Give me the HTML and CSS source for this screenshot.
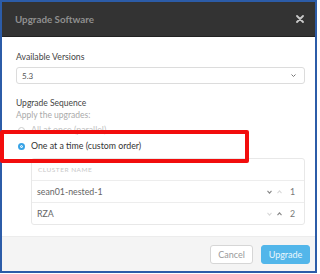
FILE: index.html
```html
<!DOCTYPE html>
<html lang="en">
<head>
    <meta charset="UTF-8">
    <meta name="viewport" content="width=device-width, initial-scale=1.0">
    <title>Upgrade Software</title>
    <link rel="stylesheet" href="styles.css">
</head>
<body>
    <div class="dialog">
        <div class="dialog-header">
            <h1>Upgrade Software</h1>
            <span class="close">
                <svg width="8" height="8" viewBox="0 0 8 8"><path d="M1 1L7 7M7 1L1 7" stroke="#c9c9c9" stroke-width="1.8" stroke-linecap="round"/></svg>
            </span>
        </div>
        <div class="dialog-body">
            <div class="field-label">Available Versions</div>
            <div class="select">
                <span>5.3</span>
                <svg width="5" height="3" viewBox="0 0 5 3"><path d="M0.5 0.5L2.5 2.5L4.5 0.5" fill="none" stroke="#777" stroke-width="1"/></svg>
            </div>
            <div class="section-title">Upgrade Sequence</div>
            <div class="hint">Apply the upgrades:</div>
            <div class="radio-row muted">
                <span class="radio"></span>
                <span>All at once (parallel)</span>
            </div>
            <div class="radio-row">
                <span class="radio checked"></span>
                <span>One at a time (custom order)</span>
            </div>
            <div class="cluster-table">
                <div class="table-head">CLUSTER NAME</div>
                <div class="table-row">
                    <span>sean01-nested-1</span>
                    <span class="order">
                        <svg width="5" height="4" viewBox="0 0 5 4"><path d="M0.5 0.8L2.5 3.2L4.5 0.8" fill="none" stroke="#8a8a8a" stroke-width="1.1"/></svg>
                        <svg width="5" height="4" viewBox="0 0 5 4"><path d="M0.5 3.2L2.5 0.8L4.5 3.2" fill="none" stroke="#dadada" stroke-width="1.1"/></svg>
                        <b>1</b>
                    </span>
                </div>
                <div class="table-row">
                    <span>RZA</span>
                    <span class="order">
                        <svg width="5" height="4" viewBox="0 0 5 4"><path d="M0.5 0.8L2.5 3.2L4.5 0.8" fill="none" stroke="#dadada" stroke-width="1.1"/></svg>
                        <svg width="5" height="4" viewBox="0 0 5 4"><path d="M0.5 3.2L2.5 0.8L4.5 3.2" fill="none" stroke="#8a8a8a" stroke-width="1.1"/></svg>
                        <b>2</b>
                    </span>
                </div>
            </div>
        </div>
        <div class="dialog-footer">
            <button class="btn btn-cancel">Cancel</button>
            <button class="btn btn-primary">Upgrade</button>
        </div>
    </div>
    <div class="highlight"></div>
</body>
</html>
```

FILE: styles.css
```css
body {
    font-family: Lato, "Open Sans", sans-serif;
    background-color: #fff;
    margin: 0;
    padding: 0;
}
.dialog {
    width: 317px;
    height: 273px;
    box-sizing: border-box;
    border: 2px solid #2c5ca8;
    display: flex;
    flex-direction: column;
    background-color: #fff;
}
.dialog-header {
    height: 35px;
    flex-shrink: 0;
    background-color: #333;
    border-bottom: 1px solid #222;
    box-sizing: border-box;
    display: flex;
    align-items: center;
    justify-content: space-between;
    padding: 0 11px 0 13px;
}
.dialog-header h1 {
    margin: 0;
    font-size: 9.8px;
    font-weight: bold;
    color: #8f8f8f;
}
.close {
    display: flex;
}
.dialog-body {
    flex: 1;
    padding: 0 10px 0 14px;
    color: #444;
}
.field-label {
    margin-top: 15px;
    font-size: 8.7px;
    line-height: 10px;
    color: #444;
}
.select {
    margin-top: 5px;
    height: 17px;
    box-sizing: border-box;
    border: 1px solid #dcdcdc;
    border-radius: 3px;
    display: flex;
    align-items: center;
    justify-content: space-between;
    padding: 0 8px 0 5px;
    font-size: 8px;
    color: #555;
}
.section-title {
    margin-top: 13px;
    font-size: 8.5px;
    line-height: 12px;
    color: #444;
}
.hint {
    font-size: 8.5px;
    line-height: 12px;
    color: #aaa;
}
.radio-row {
    display: flex;
    align-items: center;
    gap: 6px;
    margin-top: 4px;
    padding-left: 2px;
    font-size: 8.8px;
    line-height: 12px;
    color: #333;
}
.radio-row.muted {
    margin-top: 3px;
    color: #c4c4c4;
}
.radio {
    width: 5px;
    height: 5px;
    border-radius: 50%;
    border: 1px solid #ccc;
    background-color: #fff;
}
.radio.checked {
    border: 2px solid #38a3e6;
    width: 3px;
    height: 3px;
    box-shadow: inset 0 0 0 1px #fff;
    background-color: #38a3e6;
}
.cluster-table {
    margin: 6px 0 0 15px;
    border: 1px solid #e8e8e8;
    border-radius: 3px;
}
.table-head {
    height: 21px;
    line-height: 21px;
    padding-left: 6px;
    font-size: 6.5px;
    letter-spacing: 0.5px;
    color: #c8c8c8;
    border-bottom: 1px solid #ededed;
}
.table-row {
    height: 21px;
    display: flex;
    align-items: center;
    justify-content: space-between;
    padding: 0 7px 0 5px;
    font-size: 8.8px;
    color: #666;
}
.table-row + .table-row {
    border-top: 1px solid #ededed;
}
.order {
    display: flex;
    align-items: center;
    gap: 5px;
    margin-right: 2px;
}
.order b {
    font-weight: normal;
    margin-left: 3px;
    color: #777;
}
.dialog-footer {
    height: 35px;
    flex-shrink: 0;
    background-color: #f4f4f4;
    border-top: 1px solid #ececec;
    box-sizing: border-box;
    display: flex;
    justify-content: flex-end;
    align-items: flex-start;
    gap: 8px;
    padding: 8px 5px 0 0;
}
.btn {
    height: 19px;
    border-radius: 3px;
    font-family: Lato, "Open Sans", sans-serif;
    font-size: 9px;
    padding: 0;
    cursor: pointer;
}
.btn-cancel {
    width: 43px;
    background-color: #fff;
    border: 1px solid #d6d6d6;
    color: #999;
}
.btn-primary {
    width: 49px;
    background-color: #52b6ea;
    border: 1px solid #52b6ea;
    color: #eaf6fd;
}
.highlight {
    position: absolute;
    left: 0;
    top: 130px;
    width: 249px;
    height: 33px;
    box-sizing: border-box;
    border: 4px solid #f20d0d;
    border-radius: 2px;
}
```
